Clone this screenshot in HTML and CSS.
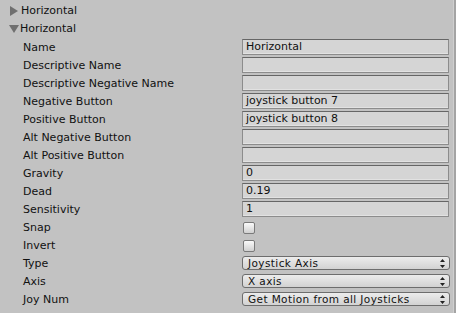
FILE: index.html
```html
<!DOCTYPE html>
<html lang="en">
<head>
  <meta charset="UTF-8" />
  <title>Input Manager</title>
  <link rel="stylesheet" href="styles.css">
</head>
<body>
  <div class="panel">
    <div class="inspector">
      <div class="foldout"><span class="arrow right"></span>Horizontal</div>
      <div class="foldout"><span class="arrow down"></span>Horizontal</div>

      <div class="row"><span class="label">Name</span><span class="field">Horizontal</span></div>
      <div class="row"><span class="label">Descriptive Name</span><span class="field"></span></div>
      <div class="row"><span class="label">Descriptive Negative Name</span><span class="field"></span></div>
      <div class="row"><span class="label">Negative Button</span><span class="field">joystick button 7</span></div>
      <div class="row"><span class="label">Positive Button</span><span class="field">joystick button 8</span></div>
      <div class="row"><span class="label">Alt Negative Button</span><span class="field"></span></div>
      <div class="row"><span class="label">Alt Positive Button</span><span class="field"></span></div>
      <div class="row"><span class="label">Gravity</span><span class="field">0</span></div>
      <div class="row"><span class="label">Dead</span><span class="field">0.19</span></div>
      <div class="row"><span class="label">Sensitivity</span><span class="field">1</span></div>
      <div class="row"><span class="label">Snap</span><span class="check"></span></div>
      <div class="row"><span class="label">Invert</span><span class="check"></span></div>
      <div class="row"><span class="label">Type</span><span class="popup">Joystick Axis<svg class="updown" width="5" height="9" viewBox="0 0 5 9"><path d="M2.5 0 L5 3 L0 3 Z M0 6 L5 6 L2.5 9 Z"/></svg></span></div>
      <div class="row"><span class="label">Axis</span><span class="popup">X axis<svg class="updown" width="5" height="9" viewBox="0 0 5 9"><path d="M2.5 0 L5 3 L0 3 Z M0 6 L5 6 L2.5 9 Z"/></svg></span></div>
      <div class="row"><span class="label">Joy Num</span><span class="popup">Get Motion from all Joysticks<svg class="updown" width="5" height="9" viewBox="0 0 5 9"><path d="M2.5 0 L5 3 L0 3 Z M0 6 L5 6 L2.5 9 Z"/></svg></span></div>
    </div>
    <div class="scrollbar"></div>
  </div>
</body>
</html>
```

FILE: styles.css
```css
body {
  margin: 0;
  background: #c2c2c2;
  font-family: "DejaVu Sans", Verdana, sans-serif;
  font-size: 11px;
  color: #111;
}
.panel { display: flex; height: 313px; }
.inspector { flex: 1; padding-top: 2px; }
.scrollbar {
  width: 3px;
  margin-left: 3px;
  background: #a4a4a4;
  border-left: 1px solid #cfcfcf;
}

.foldout {
  height: 18px; line-height: 18px;
  display: flex; align-items: center;
  padding-left: 10px;
}
.arrow { width: 11px; height: 11px; display: inline-block; }
.arrow.right {
  width: 0; height: 0; margin-right: 3px;
  border-top: 5px solid transparent;
  border-bottom: 5px solid transparent;
  border-left: 8px solid #6f6f6f;
}
.arrow.down {
  width: 0; height: 0; margin-right: 1px; margin-left: -1px;
  border-left: 5px solid transparent;
  border-right: 5px solid transparent;
  border-top: 8px solid #6f6f6f;
}

.row {
  height: 18px;
  display: flex; align-items: center;
  padding-left: 23px;
}
.label { width: 219px; flex: none; }
.field {
  width: 202px; height: 14px; line-height: 14px;
  padding-left: 3px;
  background: #d5d5d5;
  border: 1px solid #8c8c8c;
  border-top-color: #666;
  box-shadow: inset 0 -1px 0 #e2e2e2;
  white-space: nowrap; overflow: hidden;
}
.check {
  width: 10px; height: 10px;
  margin-left: 1px; margin-top: 2px;
  border: 1px solid #7a7a7a;
  border-radius: 2px;
  background: linear-gradient(#fafafa, #d0d0d0);
}
.popup {
  width: 199px; height: 12px; line-height: 12px;
  padding-left: 5px; padding-right: 2px;
  display: flex; justify-content: space-between; align-items: center;
  border: 1px solid #6d6d6d;
  border-radius: 3px;
  background: linear-gradient(#ececec, #d2d2d2);
  font-size: 10.5px;
  letter-spacing: 0.4px;
}
.updown { fill: #222; margin-right: 2px; }
```
